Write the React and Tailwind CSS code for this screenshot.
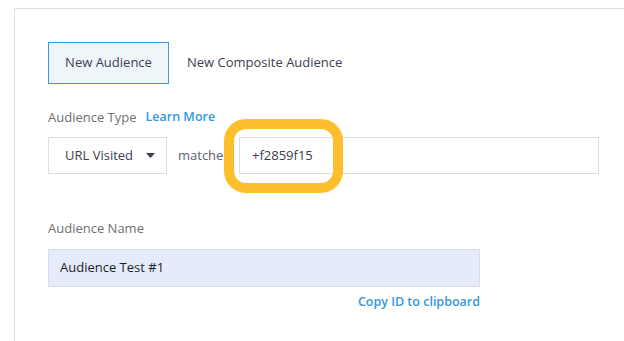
import React from 'react';

const font = { fontFamily: '"Open Sans", "Noto Sans", sans-serif' };

export default function App() {
  return (
    <div className="w-[624px] h-[341px] overflow-hidden bg-white" style={font}>
      <div className="ml-[14px] mt-[8px] h-[400px] border-l border-t border-[#dedede] pl-[33px] pt-[33px]">
        {/* tabs */}
        <div className="flex items-center">
          <div className="h-[42px] w-[121px] flex items-center justify-center border border-[#3a9ddb] bg-[#eff6fa] text-[13px] font-medium text-[#3b4150]">
            New Audience
          </div>
          <div className="ml-[18px] text-[13px] font-medium text-[#3b4150]">New Composite Audience</div>
        </div>

        {/* audience type */}
        <div className="mt-[25px] flex items-center gap-[9px] text-[13px] leading-[16px]">
          <span className="text-[#6f6f6f]">Audience Type</span>
          <span className="text-[12.5px] font-semibold text-[#3398db]">Learn More</span>
        </div>

        <div className="mt-[12px] flex items-stretch">
          <div className="h-[37px] w-[119px] flex items-center border border-[#dedede] pl-[16px] text-[13px] text-[#3b4150]">
            <span>URL Visited</span>
            <svg width="9" height="5" viewBox="0 0 9 5" className="ml-[13px]">
              <path d="M0 0h9L4.5 5z" fill="#3b4150" />
            </svg>
          </div>
          <div className="w-[72px] overflow-hidden whitespace-nowrap flex items-center pl-[11px] text-[13px] text-[#5c6170]">
            matches:
          </div>
          <div className="relative h-[37px] w-[360px] flex items-center border border-[#dedede] pl-[12px] text-[13px] text-[#3b4150]">
            +f2859f15
            <div className="absolute left-[-16px] top-[-19px] h-[74px] w-[119px] rounded-[22px] border-[10px] border-[#fdbe2b]" />
          </div>
        </div>

        {/* audience name */}
        <div className="mt-[46px] text-[13px] leading-[16px] text-[#6f6f6f]">Audience Name</div>
        <div className="mt-[13px] h-[38px] w-[432px] flex items-center border border-[#d9dde6] bg-[#e5ebfa] pl-[11px] text-[13px] text-[#1d1f24]">
          Audience Test #1
        </div>
        <div className="w-[432px] mt-[7px] text-right text-[12.5px] leading-[16px] font-semibold text-[#3398db]">
          Copy ID to clipboard
        </div>
      </div>
    </div>
  );
}
